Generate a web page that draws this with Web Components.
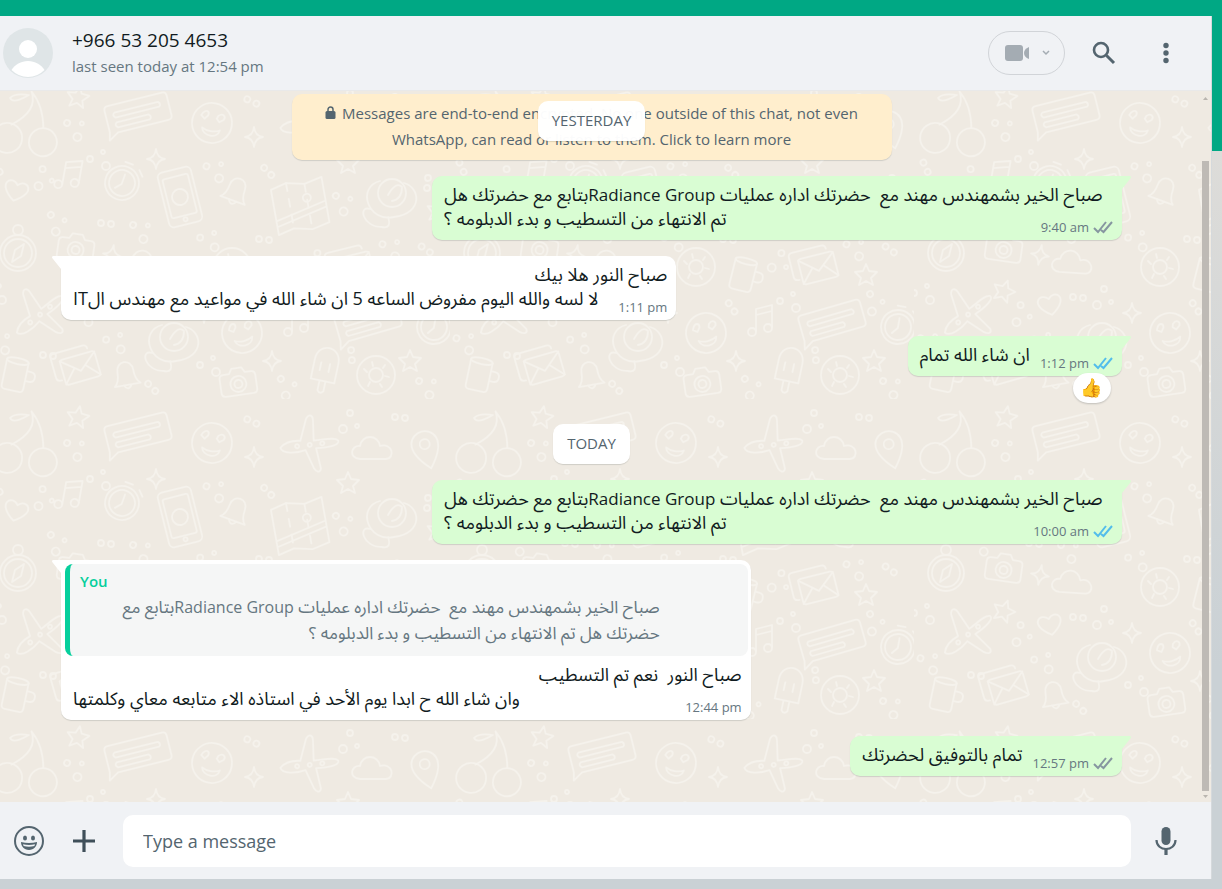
<!DOCTYPE html>
<html lang="en">
<head>
<meta charset="utf-8">
<meta name="viewport" content="width=device-width, initial-scale=1">
<title>Chat</title>
<style>
  body { margin: 0; font-family: "Open Sans", "Noto Sans", "Noto Sans Arabic", sans-serif; color: #111b21; }
  bdi span { font-size: 17px; }
  quoted-message span { font-size: 16px; }
</style>
</head>
<body>
<chat-app>
  <chat-header slot="header" name="+966 53 205 4653" status="last seen today at 12:54 pm"></chat-header>
  <chat-thread>
    <day-chip floating>YESTERDAY</day-chip>
    <encryption-note>Messages are end-to-end encrypted. No one outside of this chat, not even WhatsApp, can read or listen to them. Click to learn more</encryption-note>
    <chat-message kind="out" size="wide" time="9:40 am" receipt="delivered"><bdi slot="lead" dir="rtl">صباح الخير بشمهندس مهند مع  حضرتك اداره عمليات <span>Radiance Group</span>بتابع مع حضرتك هل</bdi><bdi dir="rtl">تم الانتهاء من التسطيب و بدء الدبلومه ؟</bdi></chat-message>
    <chat-message kind="in" size="medium" time="1:11 pm"><bdi slot="lead" dir="rtl">صباح النور هلا بيك</bdi><bdi dir="rtl">لا لسه والله اليوم مفروض الساعه 5 ان شاء الله في مواعيد مع مهندس الIT</bdi></chat-message>
    <chat-message kind="out" time="1:12 pm" receipt="read" reaction="👍"><bdi dir="rtl">ان شاء الله تمام</bdi></chat-message>
    <day-chip>TODAY</day-chip>
    <chat-message kind="out" size="wide" time="10:00 am" receipt="read"><bdi slot="lead" dir="rtl">صباح الخير بشمهندس مهند مع  حضرتك اداره عمليات <span>Radiance Group</span>بتابع مع حضرتك هل</bdi><bdi dir="rtl">تم الانتهاء من التسطيب و بدء الدبلومه ؟</bdi></chat-message>
    <chat-message kind="in" size="wide" time="12:44 pm"><quoted-message slot="quote" author="You">صباح الخير بشمهندس مهند مع  حضرتك اداره عمليات <span>Radiance Group</span>بتابع مع<br>حضرتك هل تم الانتهاء من التسطيب و بدء الدبلومه ؟</quoted-message><bdi slot="lead" dir="rtl">صباح النور  نعم تم التسطيب</bdi><bdi dir="rtl">وان شاء الله ح ابدا يوم الأحد في استاذه الاء متابعه معاي وكلمتها</bdi></chat-message>
    <chat-message kind="out" time="12:57 pm" receipt="delivered"><bdi dir="rtl">تمام بالتوفيق لحضرتك</bdi></chat-message>
  </chat-thread>
  <chat-composer slot="footer"></chat-composer>
</chat-app>

<script>
const define = (name, render) => customElements.define(name, class extends HTMLElement {
  connectedCallback() {
    if (this.shadowRoot) return;
    this.attachShadow({ mode: 'open' }).innerHTML = render(this);
  }
});

const buttonCss = `
  button { border: 0; padding: 0; background: none; color: #54656f; display: grid; place-items: center; flex: none; cursor: pointer; }
  svg { display: block; }`;

/* Wallpaper: small line drawings repeated as one SVG tile. */
const art = {
  star: '<path d="M0-11 3-4 11-3 5 3 7 10 0 6-7 10-5 3-11-3-3-4Z"/>',
  spark: '<path d="M0-10Q1-1 9 0 1 1 0 10-1 1-9 0-1-1 0-10Z"/>',
  smile: '<circle r="20"/><path d="M-11-8c3-5 7-3 6 1l-3 4-4-3zM5-8c4-4 8-1 6 3l-4 3-3-3zM-9 6c5 3 13 3 18 0-1 9-16 9-18 0z"/>',
  clock: '<circle r="17"/><circle r="13"/><path d="M0-9v10l-5 6M-4-21h8M12-18l5 5"/>',
  note: '<path d="M-6 10V-12L10-16V6M-6-6 10-10"/><circle cx="-10" cy="11" r="4"/><circle cx="6" cy="7" r="4"/>',
  heart: '<path d="M0 10C-22-4-7-15 0-6 7-15 22-4 0 10Z"/>',
  plane: '<path d="M-24 10C-20 2-12 0-6-1L-5-24c2-6 6-4 7 0L7-4c10-3 20-8 24-5 3 4-8 9-20 12L20 22c0 5-4 4-7 1L1 7c-8 5-22 9-25 3Z"/><circle cx="-8" cy="5" r="2"/><circle cx="4" cy="1" r="2"/><circle cx="16" cy="-3" r="2"/>',
  cloud: '<path d="M-16 10c-12-1-9-14 0-13 2-12 18-12 20 0 12-4 16 12 6 13Z"/>',
  chat: '<path d="M-28-14H28q4 0 4 4V10q0 4-4 4H-24l-10 6 2-8V-10q0-4 4-4Z"/><path d="M-23-6H22q3 3 0 5H-23q-3-3 0-5ZM-23 4H10q3 3 0 5H-23q-3-3 0-5Z"/>',
  camera: '<path d="M-14-8h6l3-5H5l3 5h6q4 0 4 4v14q0 4-4 4h-28q-4 0-4-4V-4q0-4 4-4Z"/><circle r="8" cy="3"/><circle r="4" cy="3"/>',
  cup: '<path d="M-12-14V12q0 4 4 4H6q4 0 4-4V-14M10-6h4q5 0 5 5t-5 5h-4"/><ellipse cx="-1" cy="-14" rx="11" ry="3"/>',
  pin: '<path d="M0 20C-24-6-10-18 0-18S24-6 0 20Z"/><circle r="5" cy="-5"/>',
  donut: '<circle r="19"/><circle r="7"/><path d="M-12-6l3 3M-4-13l1 4M9-10l-2 3M13 2l-4-1M6 12l-2-3M-8 11l2-4"/>',
  compass: '<circle r="18"/><circle r="14"/><circle r="5" cy="-23"/><path d="M-3-3 6-9 3 3-6 9Z"/>',
  rose: '<circle r="14" cx="4" cy="-4"/><path d="M-8-16C-32-10-20 26 6 20c30-4 26-30 10-34M0-2Q8-16 14-10 14 2 4 4M-18 12c-12-4-8 18 12 18q10 2 6-10"/>',
  pop: '<path d="M-11 12V-8c0-18 24-18 24 0v20ZM-2 12v10q3 4 6 0V12M-4-6v8M5-6v8"/>',
  letter: '<rect x="-18" y="-12" width="36" height="26" rx="3"/><path d="M-18-11 0 4 18-11M-18 13-6 0M18 13 6 0M-21 8q-5 0-5-4v-20q0-4 4-4H8q4 0 4 4"/>',
  map: '<path d="M-26-20-10-24 8-20 26-24V22L8 26-10 22-26 26ZM-26 12 26 0M-26 18 26 6" /><path d="M-10-24V22M8-20V26" stroke-dasharray="8 8"/><circle cx="8" cy="-6" r="4"/>',
  cherry: '<circle cx="-16" cy="18" r="15"/><circle cx="20" cy="16" r="14"/><path d="M-14 4Q10-14 0-32M18 2Q14-20 0-32M-2-28q-14 12-18 6 4-6 18-6Z"/>',
  phone: '<rect x="-17" y="-28" width="34" height="56" rx="5"/><rect x="-13" y="-21" width="26" height="40" rx="2"/><circle r="8"/><circle cy="23" r="2"/>',
  bell: '<path d="M-13 10Q-8 6-8-4C-8-16 8-16 8-4Q8 6 13 10ZM-4 10q4 7 8 0"/>',
  dots: '<circle cx="-8" r="3"/><circle cx="5" cy="-7" r="2"/><circle cx="8" cy="7" r="4"/>',
  pair: '<circle cx="-5" r="3"/><circle cx="5" cy="1" r="3"/>'
};
const places = [
  ['cherry',40,44,10],['star',92,18,10],['dots',88,48,30],['chat',152,34,-14],['smile',226,44,10],['pair',266,22,20],['spark',268,58,0],['plane',320,44,12],['dots',364,22,90],['cloud',390,50,0],['pin',440,50,-15],['pair',414,18,0],
  ['pair',12,88,60],['heart',30,112,15],['dots',58,98,80],['note',84,96,10],['dots',112,80,0],['clock',136,104,20],['spark',170,80,0],['phone',194,118,-14],['dots',228,90,20],['bell',250,112,20],['pair',282,92,40],['map',314,126,-10],['star',362,84,0],['dots',356,122,40],['rose',402,118,0],['pair',442,104,90],['star',452,132,10],
  ['compass',32,174,0],['dots',70,142,50],['camera',90,168,8],['pair',120,144,0],['spark',126,176,10],['dots',154,150,30],['cloud',162,184,4],['dots',222,160,10],['donut',246,188,0],['pair',278,160,0],['cup',294,196,14],['dots',330,182,100],['letter',368,188,-14],['dots',404,168,20],['star',416,196,0],['pair',440,170,30],
  ['dots',8,214,0],['plane',50,236,-20],['star',90,212,20],['dots',108,234,80],['heart',136,226,-12],['pair',164,218,0],['dots',190,218,90],['rose',184,262,0],['spark',218,234,0],['smile',256,254,-14],['pair',282,228,50],['note',312,242,0],['dots',338,222,0],['chat',382,242,-16],['dots',424,222,60],['clock',448,248,10],
  ['dots',14,262,20],['cup',30,296,12],['pair',62,276,0],['letter',94,288,-16],['dots',128,262,10],['bell',140,296,-10],['pair',166,308,40],['dots',222,286,0],['camera',252,302,-8],['spark',286,282,0],['dots',300,306,50],['pop',338,290,12],['pair',366,276,80],['donut',390,296,0],['star',424,282,0],['dots',440,306,30]
];
const wallpaper = () => {
  const drawings = places.map(([n, x, y, r]) => `<g transform="translate(${x} ${y}) rotate(${r})">${art[n]}</g>`).join('');
  return `url("data:image/svg+xml,${encodeURIComponent(`<svg xmlns="http://www.w3.org/2000/svg" width="464" height="320"><g fill="none" stroke="#f5f2ec" stroke-width="1.800" stroke-linejoin="round" stroke-linecap="round">${drawings}</g></svg>`)}")`;
};

define('chat-app', () => `
  <style>
    :host { display: flex; flex-direction: column; box-sizing: border-box; min-height: 100vh; padding: 16px 10px 10px 0;
      background: linear-gradient(#00a884, #00a884) top / 100% 151px no-repeat, linear-gradient(#dddcd9 151px, #cad1d5 75%); }
    main { flex: 1; display: flex; flex-direction: column; border-right: 1px solid #d5d9dc; background: #f0f2f5; }
    .body { flex: 1; display: flex; flex-direction: column; }
  </style>
  <main><slot name="header"></slot><div class="body"><slot></slot></div><slot name="footer"></slot></main>`);

define('chat-header', el => `
  <style>
    :host { display: block; }
    header { display: flex; align-items: center; gap: 16px; height: 74px; padding: 0 22px 0 3px; background: #f0f2f5; border-bottom: 1px solid #e9e9e9; }
    .who { flex: 1; min-width: 0; padding-left: 3px; }
    h1 { margin: 0; font-size: 19px; line-height: 26px; font-weight: 400; color: #111b21; }
    p { margin: 0; font-size: 15px; line-height: 26px; color: #667781; }
    ${buttonCss}
    .icon { width: 46px; height: 46px; }
    .call { grid-auto-flow: column; justify-content: center; gap: 12px; box-sizing: border-box; width: 77px; height: 44px; border: 1px solid #d1d4d8; border-radius: 22px; color: #a4acb3; }
  </style>
  <header>
    <svg width="50" height="50" viewBox="0 0 50 50" role="img" aria-label="Profile photo"><circle cx="25" cy="25" r="25" fill="#dfe5e7"/><circle cx="25" cy="21" r="9" fill="#fff"/><path d="M8.500 42C12 36.500 18 33 25 33s13 3.500 16.500 9A24 24 0 0 1 25 49 24 24 0 0 1 8.500 42Z" fill="#fff"/></svg>
    <div class="who"><h1>${el.getAttribute('name')}</h1><p>${el.getAttribute('status')}</p></div>
    <button class="call" aria-label="Video call">
      <svg width="26" height="18" viewBox="0 0 26 18" fill="currentColor"><rect x="1" y="1" width="18" height="16" rx="3"/><path d="M25 3v12q-5-2-5-6t5-6Z"/></svg>
      <svg width="8" height="6" viewBox="0 0 8 6" fill="none" stroke="currentColor" stroke-width="1.500"><path d="m1 1 3 3 3-3"/></svg>
    </button>
    <button class="icon" aria-label="Search"><svg width="24" height="24" viewBox="0 0 24 24" fill="none" stroke="currentColor"><circle cx="9" cy="9" r="7" stroke-width="2.600"/><path d="m14.500 14.500 7.500 7.500" stroke-width="3"/></svg></button>
    <button class="icon" aria-label="Menu"><svg width="6" height="22" viewBox="0 0 6 22" fill="currentColor"><circle cx="3" cy="3.500" r="2.700"/><circle cx="3" cy="11" r="2.700"/><circle cx="3" cy="18.500" r="2.700"/></svg></button>
  </header>`);

define('chat-thread', () => `
  <style>
    :host { flex: 1; display: grid; grid-template-columns: 1fr 10px; background: #efeae2 ${wallpaper()} -14px -12px; }
    .list { position: relative; display: flex; flex-direction: column; gap: 16px; padding: 3px 79px 26px 61px; }
    .bar { display: flex; flex-direction: column; align-items: center; padding: 5px 2px 3px 1px; color: #b9b5af; }
    .bar svg { display: block; flex: none; }
    .thumb { flex: 1; align-self: stretch; margin: 60px 0 3px; background: #bebab5; }
  </style>
  <div class="list"><slot></slot></div>
  <div class="bar" aria-hidden="true">
    <svg width="5" height="5" fill="currentColor"><path d="M0 4h5L2.500 1Z"/></svg><div class="thumb"></div><svg width="5" height="5" fill="currentColor"><path d="M0 1h5L2.500 4Z"/></svg>
  </div>`);

define('encryption-note', () => `
  <style>
    :host { display: block; align-self: center; box-sizing: border-box; max-width: 600px; padding: 6px 30px 8px; border-radius: 10px;
      background: #ffeecd; box-shadow: 0 1px 1px #0b141a22; color: #54656f; font-size: 15px; line-height: 26px; text-align: center; }
    svg { margin-right: 2px; }
  </style>
  <svg width="11" height="13" viewBox="0 0 11 13" aria-hidden="true"><rect x="0.500" y="5" width="10" height="8" rx="1.500" fill="currentColor"/><path d="M3 6V3.500a2.500 2.500 0 0 1 5 0V6" fill="none" stroke="currentColor" stroke-width="1.500"/></svg>
  <slot></slot>`);

define('day-chip', () => `
  <style>
    :host { display: block; align-self: center; padding: 0 14px 2px; border-radius: 10px; background: #fffffff8; box-shadow: 0 1px 1px #0b141a22;
      color: #54656f; font-size: 15px; line-height: 38px; }
    :host([floating]) { position: absolute; top: 10px; z-index: 1; }
    :host(:not([floating])) { margin-top: 32px; }
  </style>
  <slot></slot>`);

define('quoted-message', el => `
  <style>
    :host { display: block; margin: 4px 3px 0 4px; padding: 4px 88px 10px 10px; border-left: 5px solid #06cf9c; border-radius: 8px; background: #f5f6f6; }
    strong { display: block; font-size: 15px; line-height: 26px; font-weight: 600; color: #06cf9c; }
    div { font-size: 17px; line-height: 26px; color: #667781; white-space: pre; }
  </style>
  <strong>${el.getAttribute('author')}</strong><div dir="rtl"><slot></slot></div>`);

define('chat-message', el => {
  const out = el.getAttribute('kind') === 'out', receipt = el.getAttribute('receipt'), reaction = el.getAttribute('reaction');
  return `
  <style>
    :host { position: relative; display: block; box-sizing: border-box; max-width: 65%; border-radius: 10px; background: #fff;
      box-shadow: 0 1px 1px #0b141a22; font-size: 18px; line-height: 24px; align-self: flex-start; border-top-left-radius: 0; }
    :host([kind="out"]) { align-self: flex-end; background: #d9fdd3; border-radius: 10px 0 10px 10px; }
    :host([size="wide"]) { width: 65%; }
    :host([size="medium"]) { width: 58%; }
    ::slotted(bdi) { white-space: pre; }
    .text { padding: 6px 9px 5px 12px; }
    .lead { height: 24px; text-align: ${out ? 'left' : 'right'}; }
    .last { display: flex; justify-content: space-between; align-items: flex-end; gap: 10px; }
    .last p { margin: 0 0 5px; height: 24px; }
    .meta { display: flex; gap: 4px; align-items: center; font-size: 13px; line-height: 16px; color: #667781; white-space: nowrap; }
    .meta svg { display: block; color: ${receipt === 'read' ? '#53bdeb' : '#8696a0'}; }
    .tail { position: absolute; top: 0; ${out ? 'right' : 'left'}: -9px; color: ${out ? '#d9fdd3' : '#fff'}; }
    .react { position: absolute; right: 11px; bottom: -27px; width: 38px; height: 30px; padding: 0; border: 0; border-radius: 15px; background: #fff;
      box-shadow: 0 1px 2px #0b141a33; font: 18px/30px "Noto Color Emoji", sans-serif; text-align: center; }
  </style>
  <svg class="tail" width="9" height="13" fill="currentColor" aria-hidden="true"><path d="${out ? 'M0 0h8q2 1 0 3L0 13Z' : 'M9 0H1q-2 1 0 3l8 10Z'}"/></svg>
  <slot name="quote"></slot>
  <div class="text">
    ${el.querySelector('[slot=lead]') ? '<div class="lead"><slot name="lead"></slot></div>' : ''}
    <div class="last"><p><slot></slot></p><div class="meta"><time>${el.getAttribute('time')}</time>${receipt ? '<svg width="20" height="14" viewBox="0 0 20 14" fill="none" stroke="currentColor" stroke-width="2" role="img" aria-label="' + receipt + '"><path d="m1 8 4 4 8-10M8 10l2.500 2L19 2"/></svg>' : ''}</div></div>
  </div>
  ${reaction ? `<button class="react" aria-label="Reaction">${reaction}</button>` : ''}`;
});

define('chat-composer', () => `
  <style>
    :host { display: block; }
    form { display: flex; align-items: center; gap: 5px; height: 77px; padding: 0 20px 0 4px; background: #f0f2f5; }
    ${buttonCss}
    button { width: 50px; height: 50px; }
    input { flex: 1; min-width: 0; height: 52px; box-sizing: border-box; margin: 0 5px 0 9px; padding: 0 20px; border: 0; border-radius: 10px; background: #fff;
      color: #111b21; font-family: inherit; font-size: 18px; outline: 0; }
    input::placeholder { color: #54656f; opacity: 1; }
  </style>
  <form>
    <button type="button" aria-label="Emoji"><svg width="30" height="30" viewBox="0 0 30 30"><circle cx="15" cy="15" r="14" fill="none" stroke="currentColor" stroke-width="2"/><ellipse cx="11" cy="12" rx="2" ry="2.500" fill="currentColor"/><ellipse cx="19" cy="12" rx="2" ry="2.500" fill="currentColor"/><path d="M7 16q8 2 16 0c0 4-3 8-8 8s-8-4-8-8Z" fill="currentColor"/><path d="M9 18.300q6 1.500 12 0l-.600 1.700q-5.400 1.500-10.800 0Z" fill="#f0f2f5"/></svg></button>
    <button type="button" aria-label="Attach"><svg width="24" height="24" viewBox="0 0 24 24"><path d="M12 1v22M1 12h22" stroke="#3f4f59" stroke-width="3.200"/></svg></button>
    <input type="text" placeholder="Type a message" aria-label="Type a message">
    <button type="button" aria-label="Voice message"><svg width="22" height="30" viewBox="0 0 22 30"><rect x="6.500" y="1" width="9" height="18" rx="4.500" fill="currentColor"/><path d="M1.500 14c0 12 19 12 19 0" fill="none" stroke="currentColor" stroke-width="2.200"/><path d="M11 22v7" stroke="currentColor" stroke-width="3.200"/></svg></button>
  </form>`);
</script>
</body>
</html>
